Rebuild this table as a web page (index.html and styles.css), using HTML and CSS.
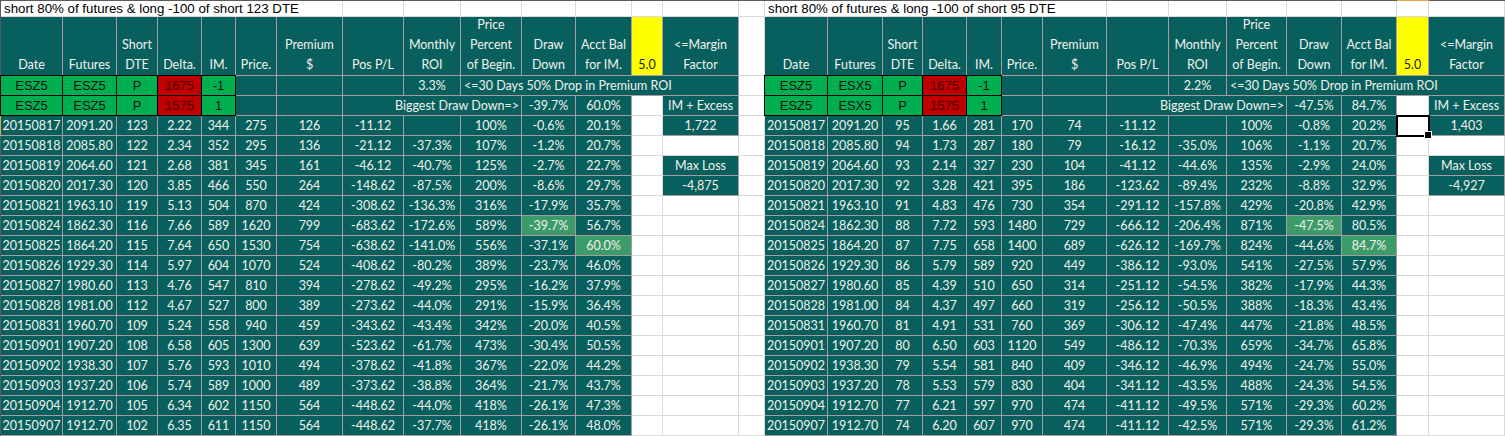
FILE: index.html
```html
<!DOCTYPE html>
<html lang="en">
<head>
<meta charset="utf-8">
<title>Short puts sheet</title>
<link rel="stylesheet" href="styles.css">
</head>
<body>
<div class="sheet">
  <!-- title row -->
  <div class="w title s7">short 80% of futures &amp; long -100 of short 123 DTE</div>
  <div class="w"></div><div class="w"></div><div class="w"></div><div class="w"></div><div class="w"></div><div class="w"></div><div class="w"></div>
  <div class="w"></div>
  <div class="w title s7">short 80% of futures &amp; long -100 of short 95 DTE</div>
  <div class="w"></div><div class="w"></div><div class="w"></div><div class="w"></div><div class="w"></div><div class="w selcol"></div><div class="w"></div>

  <!-- header row -->
  <div class="h">Date</div><div class="h">Futures</div><div class="h">Short<br>DTE</div><div class="h">Delta.</div><div class="h">IM.</div><div class="h">Price.</div><div class="h">Premium<br>$</div><div class="h">Pos P/L</div><div class="h">Monthly<br>ROI</div><div class="h">Price<br>Percent<br>of Begin.</div><div class="h">Draw<br>Down</div><div class="h">Acct Bal<br>for IM.</div><div class="h y">5.0</div><div class="h">&lt;=Margin<br>Factor</div>
  <div class="w"></div>
  <div class="h">Date</div><div class="h">Futures</div><div class="h">Short<br>DTE</div><div class="h">Delta.</div><div class="h">IM.</div><div class="h">Price.</div><div class="h">Premium<br>$</div><div class="h">Pos P/L</div><div class="h">Monthly<br>ROI</div><div class="h">Price<br>Percent<br>of Begin.</div><div class="h">Draw<br>Down</div><div class="h">Acct Bal<br>for IM.</div><div class="h y">5.0</div><div class="h">&lt;=Margin<br>Factor</div>

  <!-- legs row 1 -->
  <div class="g gt gl">ESZ5</div><div class="g gt">ESZ5</div><div class="g gt">P</div><div class="g r gt">1675</div><div class="g gt">-1</div><div></div><div></div><div></div><div>3.3%</div><div class="s5 note">&lt;=30 Days 50% Drop in Premium ROI</div>
  <div class="w"></div>
  <div class="g gt gl">ESZ5</div><div class="g gt">ESX5</div><div class="g gt">P</div><div class="g r gt">1675</div><div class="g gt">-1</div><div></div><div></div><div></div><div>2.2%</div><div class="s5 note">&lt;=30 Days 50% Drop in Premium ROI</div>

  <!-- legs row 2 -->
  <div class="g gl">ESZ5</div><div class="g">ESZ5</div><div class="g">P</div><div class="g r">1575</div><div class="g">1</div><div></div><div></div><div class="s3 big">Biggest Draw Down=&gt;</div><div>-39.7%</div><div>60.0%</div><div class="w"></div><div>IM + Excess</div>
  <div class="w"></div>
  <div class="g gl">ESZ5</div><div class="g">ESX5</div><div class="g">P</div><div class="g r">1575</div><div class="g">1</div><div></div><div></div><div class="s3 big">Biggest Draw Down=&gt;</div><div>-47.5%</div><div>84.7%</div><div class="w"></div><div>IM + Excess</div>

  <!-- data -->
  <div class="selrow">20150817</div><div>2091.20</div><div>123</div><div>2.22</div><div>344</div><div>275</div><div>126</div><div>-11.12</div><div></div><div>100%</div><div>-0.6%</div><div>20.1%</div><div class="w"></div><div>1,722</div>
  <div class="w"></div>
  <div>20150817</div><div>2091.20</div><div>95</div><div>1.66</div><div>281</div><div>170</div><div>74</div><div>-11.12</div><div></div><div>100%</div><div>-0.8%</div><div>20.2%</div><div class="w sel"></div><div>1,403</div>

  <div>20150818</div><div>2085.80</div><div>122</div><div>2.34</div><div>352</div><div>295</div><div>136</div><div>-21.12</div><div>-37.3%</div><div>107%</div><div>-1.2%</div><div>20.7%</div><div class="w"></div><div class="w"></div>
  <div class="w"></div>
  <div>20150818</div><div>2085.80</div><div>94</div><div>1.73</div><div>287</div><div>180</div><div>79</div><div>-16.12</div><div>-35.0%</div><div>106%</div><div>-1.1%</div><div>20.7%</div><div class="w"></div><div class="w"></div>

  <div>20150819</div><div>2064.60</div><div>121</div><div>2.68</div><div>381</div><div>345</div><div>161</div><div>-46.12</div><div>-40.7%</div><div>125%</div><div>-2.7%</div><div>22.7%</div><div class="w"></div><div>Max Loss</div>
  <div class="w"></div>
  <div>20150819</div><div>2064.60</div><div>93</div><div>2.14</div><div>327</div><div>230</div><div>104</div><div>-41.12</div><div>-44.6%</div><div>135%</div><div>-2.9%</div><div>24.0%</div><div class="w"></div><div>Max Loss</div>

  <div>20150820</div><div>2017.30</div><div>120</div><div>3.85</div><div>466</div><div>550</div><div>264</div><div>-148.62</div><div>-87.5%</div><div>200%</div><div>-8.6%</div><div>29.7%</div><div class="w"></div><div>-4,875</div>
  <div class="w"></div>
  <div>20150820</div><div>2017.30</div><div>92</div><div>3.28</div><div>421</div><div>395</div><div>186</div><div>-123.62</div><div>-89.4%</div><div>232%</div><div>-8.8%</div><div>32.9%</div><div class="w"></div><div>-4,927</div>

  <div>20150821</div><div>1963.10</div><div>119</div><div>5.13</div><div>504</div><div>870</div><div>424</div><div>-308.62</div><div>-136.3%</div><div>316%</div><div>-17.9%</div><div>35.7%</div><div class="w"></div><div class="w"></div>
  <div class="w"></div>
  <div>20150821</div><div>1963.10</div><div>91</div><div>4.83</div><div>476</div><div>730</div><div>354</div><div>-291.12</div><div>-157.8%</div><div>429%</div><div>-20.8%</div><div>42.9%</div><div class="w"></div><div class="w"></div>

  <div>20150824</div><div>1862.30</div><div>116</div><div>7.66</div><div>589</div><div>1620</div><div>799</div><div>-683.62</div><div>-172.6%</div><div>589%</div><div class="hl">-39.7%</div><div>56.7%</div><div class="w"></div><div class="w"></div>
  <div class="w"></div>
  <div>20150824</div><div>1862.30</div><div>88</div><div>7.72</div><div>593</div><div>1480</div><div>729</div><div>-666.12</div><div>-206.4%</div><div>871%</div><div class="hl">-47.5%</div><div>80.5%</div><div class="w"></div><div class="w"></div>

  <div>20150825</div><div>1864.20</div><div>115</div><div>7.64</div><div>650</div><div>1530</div><div>754</div><div>-638.62</div><div>-141.0%</div><div>556%</div><div>-37.1%</div><div class="hl">60.0%</div><div class="w"></div><div class="w"></div>
  <div class="w"></div>
  <div>20150825</div><div>1864.20</div><div>87</div><div>7.75</div><div>658</div><div>1400</div><div>689</div><div>-626.12</div><div>-169.7%</div><div>824%</div><div>-44.6%</div><div class="hl">84.7%</div><div class="w"></div><div class="w"></div>

  <div>20150826</div><div>1929.30</div><div>114</div><div>5.97</div><div>604</div><div>1070</div><div>524</div><div>-408.62</div><div>-80.2%</div><div>389%</div><div>-23.7%</div><div>46.0%</div><div class="w"></div><div class="w"></div>
  <div class="w"></div>
  <div>20150826</div><div>1929.30</div><div>86</div><div>5.79</div><div>589</div><div>920</div><div>449</div><div>-386.12</div><div>-93.0%</div><div>541%</div><div>-27.5%</div><div>57.9%</div><div class="w"></div><div class="w"></div>

  <div>20150827</div><div>1980.60</div><div>113</div><div>4.76</div><div>547</div><div>810</div><div>394</div><div>-278.62</div><div>-49.2%</div><div>295%</div><div>-16.2%</div><div>37.9%</div><div class="w"></div><div class="w"></div>
  <div class="w"></div>
  <div>20150827</div><div>1980.60</div><div>85</div><div>4.39</div><div>510</div><div>650</div><div>314</div><div>-251.12</div><div>-54.5%</div><div>382%</div><div>-17.9%</div><div>44.3%</div><div class="w"></div><div class="w"></div>

  <div>20150828</div><div>1981.00</div><div>112</div><div>4.67</div><div>527</div><div>800</div><div>389</div><div>-273.62</div><div>-44.0%</div><div>291%</div><div>-15.9%</div><div>36.4%</div><div class="w"></div><div class="w"></div>
  <div class="w"></div>
  <div>20150828</div><div>1981.00</div><div>84</div><div>4.37</div><div>497</div><div>660</div><div>319</div><div>-256.12</div><div>-50.5%</div><div>388%</div><div>-18.3%</div><div>43.4%</div><div class="w"></div><div class="w"></div>

  <div>20150831</div><div>1960.70</div><div>109</div><div>5.24</div><div>558</div><div>940</div><div>459</div><div>-343.62</div><div>-43.4%</div><div>342%</div><div>-20.0%</div><div>40.5%</div><div class="w"></div><div class="w"></div>
  <div class="w"></div>
  <div>20150831</div><div>1960.70</div><div>81</div><div>4.91</div><div>531</div><div>760</div><div>369</div><div>-306.12</div><div>-47.4%</div><div>447%</div><div>-21.8%</div><div>48.5%</div><div class="w"></div><div class="w"></div>

  <div>20150901</div><div>1907.20</div><div>108</div><div>6.58</div><div>605</div><div>1300</div><div>639</div><div>-523.62</div><div>-61.7%</div><div>473%</div><div>-30.4%</div><div>50.5%</div><div class="w"></div><div class="w"></div>
  <div class="w"></div>
  <div>20150901</div><div>1907.20</div><div>80</div><div>6.50</div><div>603</div><div>1120</div><div>549</div><div>-486.12</div><div>-70.3%</div><div>659%</div><div>-34.7%</div><div>65.8%</div><div class="w"></div><div class="w"></div>

  <div>20150902</div><div>1938.30</div><div>107</div><div>5.76</div><div>593</div><div>1010</div><div>494</div><div>-378.62</div><div>-41.8%</div><div>367%</div><div>-22.0%</div><div>44.2%</div><div class="w"></div><div class="w"></div>
  <div class="w"></div>
  <div>20150902</div><div>1938.30</div><div>79</div><div>5.54</div><div>581</div><div>840</div><div>409</div><div>-346.12</div><div>-46.9%</div><div>494%</div><div>-24.7%</div><div>55.0%</div><div class="w"></div><div class="w"></div>

  <div>20150903</div><div>1937.20</div><div>106</div><div>5.74</div><div>589</div><div>1000</div><div>489</div><div>-373.62</div><div>-38.8%</div><div>364%</div><div>-21.7%</div><div>43.7%</div><div class="w"></div><div class="w"></div>
  <div class="w"></div>
  <div>20150903</div><div>1937.20</div><div>78</div><div>5.53</div><div>579</div><div>830</div><div>404</div><div>-341.12</div><div>-43.5%</div><div>488%</div><div>-24.3%</div><div>54.5%</div><div class="w"></div><div class="w"></div>

  <div>20150904</div><div>1912.70</div><div>105</div><div>6.34</div><div>602</div><div>1150</div><div>564</div><div>-448.62</div><div>-44.0%</div><div>418%</div><div>-26.1%</div><div>47.3%</div><div class="w"></div><div class="w"></div>
  <div class="w"></div>
  <div>20150904</div><div>1912.70</div><div>77</div><div>6.21</div><div>597</div><div>970</div><div>474</div><div>-411.12</div><div>-49.5%</div><div>571%</div><div>-29.3%</div><div>60.2%</div><div class="w"></div><div class="w"></div>

  <div>20150907</div><div>1912.70</div><div>102</div><div>6.35</div><div>611</div><div>1150</div><div>564</div><div>-448.62</div><div>-37.7%</div><div>418%</div><div>-26.1%</div><div>48.0%</div><div class="w"></div><div class="w"></div>
  <div class="w"></div>
  <div>20150907</div><div>1912.70</div><div>74</div><div>6.20</div><div>607</div><div>970</div><div>474</div><div>-411.12</div><div>-42.5%</div><div>571%</div><div>-29.3%</div><div>61.2%</div><div class="w"></div><div class="w"></div>
</div>
</body>
</html>
```

FILE: styles.css
```css
* {
  box-sizing: border-box;
}

html, body {
  margin: 0;
  padding: 0;
  background: #ffffff;
  overflow: hidden;
}

.sheet {
  display: grid;
  grid-template-columns:
    62px 54px 41px 44px 34px 41px 66px 61px 57px 61px 54px 56px 31px 76px
    26px
    63px 55px 40px 44px 35px 41px 64px 62px 58px 60px 55px 55px 32px 76px;
  grid-template-rows: 16px 59px repeat(18, 20px);
  width: 1505px;
  border-left: 1px solid #5b5b5b;
  border-top: 1px solid #5b5b5b;
  font-family: Lato, "Open Sans", sans-serif;
  font-size: 12.5px;
  color: #f3f1ea;
}

.sheet > div {
  display: flex;
  align-items: center;
  justify-content: center;
  white-space: nowrap;
  line-height: 20px;
  background: #07605e;
  border-right: 1px solid #a59ca1;
  border-bottom: 1px solid #a59ca1;
  overflow: visible;
}

/* plain white spreadsheet cells */
.sheet > .w {
  background: #ffffff;
  border-color: #dadada;
}

.sheet > .title {
  justify-content: flex-start;
  padding-left: 3px;
  font-family: "Liberation Sans", Arial, sans-serif;
  font-size: 13.3px;
  line-height: 15px;
  color: #000000;
}

.sheet > .selcol {
  box-shadow: 0 -1px 0 #e2a54c;
}

.sheet > .selrow {
  box-shadow: -1px 0 0 #e2a54c;
}

/* header cells */
.sheet > .h {
  align-items: flex-end;
  text-align: center;
  line-height: 20px;
  padding-bottom: 0;
}

.sheet > .y {
  background: #ffff00;
  color: #222222;
}

/* leg cells */
.sheet > .g {
  background: #00b050;
  color: #101010;
  border-color: #000000;
  font-family: "Liberation Sans", Arial, sans-serif;
  font-size: 13px;
}

.sheet > .r {
  background: #c00000;
  color: #4a0000;
}

.sheet > .gt {
  box-shadow: 0 -1px 0 #000000;
}

.sheet > .gl {
  box-shadow: -1px 0 0 #000000;
}

.sheet > .gt.gl {
  box-shadow: -1px 0 0 #000000, 0 -1px 0 #000000, -1px -1px 0 #000000;
}

.s3 { grid-column: span 3; }
.s5 { grid-column: span 5; }
.s7 { grid-column: span 7; }

.sheet > .note {
  justify-content: flex-start;
  padding-left: 3px;
}

.sheet > .big {
  justify-content: flex-end;
  padding-right: 2px;
}

.sheet > .hl {
  background: #3c9c69;
}

/* active cell selection */
.sheet > .sel {
  position: relative;
  outline: 2px solid #000000;
  outline-offset: -1px;
  z-index: 1;
}

.sheet > .sel::after {
  content: "";
  position: absolute;
  right: -4px;
  bottom: -4px;
  width: 6px;
  height: 6px;
  background: #000000;
  border: 1px solid #ffffff;
}
```
